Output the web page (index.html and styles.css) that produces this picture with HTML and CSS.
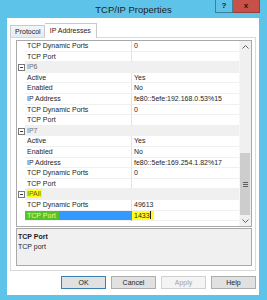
FILE: index.html
```html
<!DOCTYPE html>
<html lang="en">
<head>
    <meta charset="UTF-8">
    <title>TCP/IP Properties</title>
    <link rel="stylesheet" href="styles.css">
</head>
<body>
    <div class="window">
        <div class="titlebar">
            <div></div>
            <div class="title">TCP/IP Properties</div>
            <div class="caption-buttons">
                <div class="cap-btn help">?</div>
                <div class="cap-btn close">x</div>
            </div>
        </div>

        <div class="client">
            <div class="tabs">
                <div class="tab">Protocol</div>
                <div class="tab active">IP Addresses</div>
            </div>

            <div class="page">
                <div class="grid">
                    <div class="rows">
                        <div class="row"><span class="gutter"></span><span class="name">TCP Dynamic Ports</span><span class="value">0</span></div>
                        <div class="row"><span class="gutter"></span><span class="name">TCP Port</span><span class="value"></span></div>
                        <div class="row category"><span class="gutter"><i class="toggle"></i></span><span class="name">IP6</span></div>
                        <div class="row"><span class="gutter"></span><span class="name">Active</span><span class="value">Yes</span></div>
                        <div class="row"><span class="gutter"></span><span class="name">Enabled</span><span class="value">No</span></div>
                        <div class="row"><span class="gutter"></span><span class="name">IP Address</span><span class="value">fe80::5efe:192.168.0.53%15</span></div>
                        <div class="row"><span class="gutter"></span><span class="name">TCP Dynamic Ports</span><span class="value">0</span></div>
                        <div class="row"><span class="gutter"></span><span class="name">TCP Port</span><span class="value"></span></div>
                        <div class="row category"><span class="gutter"><i class="toggle"></i></span><span class="name">IP7</span></div>
                        <div class="row"><span class="gutter"></span><span class="name">Active</span><span class="value">Yes</span></div>
                        <div class="row"><span class="gutter"></span><span class="name">Enabled</span><span class="value">No</span></div>
                        <div class="row"><span class="gutter"></span><span class="name">IP Address</span><span class="value">fe80::5efe:169.254.1.82%17</span></div>
                        <div class="row"><span class="gutter"></span><span class="name">TCP Dynamic Ports</span><span class="value">0</span></div>
                        <div class="row"><span class="gutter"></span><span class="name">TCP Port</span><span class="value"></span></div>
                        <div class="row category"><span class="gutter"><i class="toggle"></i></span><span class="name"><mark class="hl">IPAll</mark></span></div>
                        <div class="row"><span class="gutter"></span><span class="name">TCP Dynamic Ports</span><span class="value">49613</span></div>
                        <div class="row selected"><span class="gutter"></span><span class="name"><mark class="hl-sel">TCP Port</mark></span><span class="value"><mark class="hl-val">1433<span class="caret"></span></mark></span></div>
                    </div>
                    <div class="scrollbar">
                        <div class="sb-btn">
                            <svg width="7" height="4" viewBox="0 0 7 4"><path d="M0.5 3.5 L3.5 0.5 L6.5 3.5" fill="none" stroke="#606060" stroke-width="1"/></svg>
                        </div>
                        <div class="sb-track">
                            <div class="sb-thumb">
                                <span></span><span></span><span></span>
                            </div>
                        </div>
                        <div class="sb-btn">
                            <svg width="7" height="4" viewBox="0 0 7 4"><path d="M0.5 0.5 L3.5 3.5 L6.5 0.5" fill="none" stroke="#606060" stroke-width="1"/></svg>
                        </div>
                    </div>
                </div>

                <div class="description">
                    <div class="desc-title">TCP Port</div>
                    <div class="desc-text">TCP port</div>
                </div>
            </div>

            <div class="buttons">
                <button class="btn default">OK</button>
                <button class="btn">Cancel</button>
                <button class="btn" disabled>Apply</button>
                <button class="btn">Help</button>
            </div>
        </div>
    </div>
</body>
</html>
```

FILE: styles.css
```css
* {
    margin: 0;
    padding: 0;
    box-sizing: border-box;
    font-family: 'Liberation Sans', Arial, sans-serif;
}

body {
    background-color: #5ec3e8;
    width: 267px;
    height: 300px;
    overflow: hidden;
}

.window {
    width: 267px;
    height: 300px;
}

/* Barra de titulo */
.titlebar {
    height: 18px;
    display: grid;
    grid-template-columns: 1fr auto 1fr;
}

.title {
    font-size: 9.5px;
    color: #1e1e1e;
    line-height: 20px;
}

.caption-buttons {
    display: flex;
    justify-content: flex-end;
    margin-right: 7px;
    height: 13px;
}

.cap-btn {
    height: 13px;
    font-size: 8px;
    font-weight: bold;
    color: #1a1a1a;
    text-align: center;
    line-height: 12px;
}

.cap-btn.help {
    width: 18px;
    border: 1px solid #3f7f98;
    border-top: none;
}

.cap-btn.close {
    width: 27px;
    background-color: #c75049;
    border-right: 1px solid #9d3b36;
    border-bottom: 1px solid #9d3b36;
}

.client {
    background: white;
    margin: 0 8px 0 7px;
    height: 277px;
    padding-top: 5px;
}

/* Pestañas */
.tabs {
    display: flex;
    align-items: flex-end;
    padding-left: 3px;
    height: 14px;
}

.tab {
    font-size: 7px;
    color: #1e1e1e;
    height: 12px;
    line-height: 11px;
    padding: 0 3px 0 4px;
    border: 1px solid #c9c9c9;
    border-bottom: none;
    background: linear-gradient(#f2f6fb, #e3ebf4);
}

.tab.active {
    position: relative;
    z-index: 1;
    height: 15px;
    margin-bottom: -1px;
    padding: 0 5px;
    line-height: 13px;
    background: white;
    border-left: none;
}

.page {
    margin: 0 3px;
    height: 234px;
    border: 1px solid #d9d9d9;
    padding: 2px 3px 0 5px;
}

/* Cuadricula de propiedades */
.grid {
    height: 187px;
    border: 1px solid #a9a9a9;
    display: flex;
    margin-bottom: 1px;
}

.rows {
    flex: 1;
}

.row {
    display: flex;
    height: 10.6px;
    font-size: 7px;
    color: #1e1e1e;
    line-height: 10px;
}

.gutter {
    width: 8px;
    display: flex;
    align-items: center;
    justify-content: center;
}

.name {
    width: 106px;
    padding-left: 2px;
    border-bottom: 1px solid #f0f0f0;
    white-space: nowrap;
}

.value {
    flex: 1;
    padding-left: 2px;
    border-left: 1px solid #e3e3e3;
    border-bottom: 1px solid #f0f0f0;
    white-space: nowrap;
}

.row.category .name {
    flex: 1;
    background-color: #f0f0f0;
    color: #6d6d6d;
}

.toggle {
    display: block;
    width: 7px;
    height: 7px;
    border: 1px solid #7a7a7a;
    background: linear-gradient(#3c3c3c, #3c3c3c) center / 3px 1px no-repeat;
    margin-left: 1px;
}

mark {
    color: inherit;
}

.hl {
    background-color: #ffff1a;
    color: #5e5e00;
    padding: 1px 1px 1px 0;
}

.row.selected .name {
    background-color: #3399ff;
    padding-left: 0;
}

.hl-sel {
    display: inline-block;
    height: 100%;
    background-color: #55c12c;
    color: #f4ff6a;
    padding: 0 3px 0 2px;
}

.row.selected .value {
    border-left: 1px solid #3399ff;
    padding-left: 0;
}

.hl-val {
    display: inline-block;
    height: 100%;
    background-color: #ffff1a;
    padding: 0 3px 0 2px;
}

.caret {
    display: inline-block;
    width: 1px;
    height: 8px;
    background: #1e1e1e;
    vertical-align: -1px;
}

/* Barra de desplazamiento */
.scrollbar {
    width: 12px;
    display: flex;
    flex-direction: column;
    background-color: #f0f0f0;
    border-left: 1px solid #f7f7f7;
}

.sb-btn {
    height: 11px;
    display: flex;
    align-items: center;
    justify-content: center;
    background: #f0f0f0;
}

.sb-track {
    flex: 1;
    display: flex;
    flex-direction: column;
    justify-content: flex-end;
}

.sb-thumb {
    height: 62px;
    margin: 0 1px 0 0;
    background-color: #cdcdcd;
    display: flex;
    flex-direction: column;
    align-items: center;
    justify-content: center;
    gap: 1px;
}

.sb-thumb span {
    display: block;
    width: 5px;
    height: 1px;
    background: #606060;
}

/* Descripcion */
.description {
    height: 38px;
    background-color: #f0f0f0;
    border: 1px solid #a9a9a9;
    padding: 3px 0 0 1px;
    font-size: 7px;
    color: #1e1e1e;
}

.desc-title {
    font-weight: bold;
    line-height: 10px;
}

.desc-text {
    line-height: 10px;
}

/* Botones */
.buttons {
    display: flex;
    justify-content: flex-end;
    gap: 5px;
    margin-top: 5px;
    padding-right: 3px;
}

.btn {
    width: 45px;
    height: 13px;
    font-size: 7px;
    color: #1e1e1e;
    background-color: #e1e1e1;
    border: 1px solid #adadad;
}

.btn.default {
    border-color: #3c7fb1;
}

.btn:disabled {
    background-color: #f4f4f4;
    border-color: #d0d0d0;
    color: #a3a3a3;
}
```
